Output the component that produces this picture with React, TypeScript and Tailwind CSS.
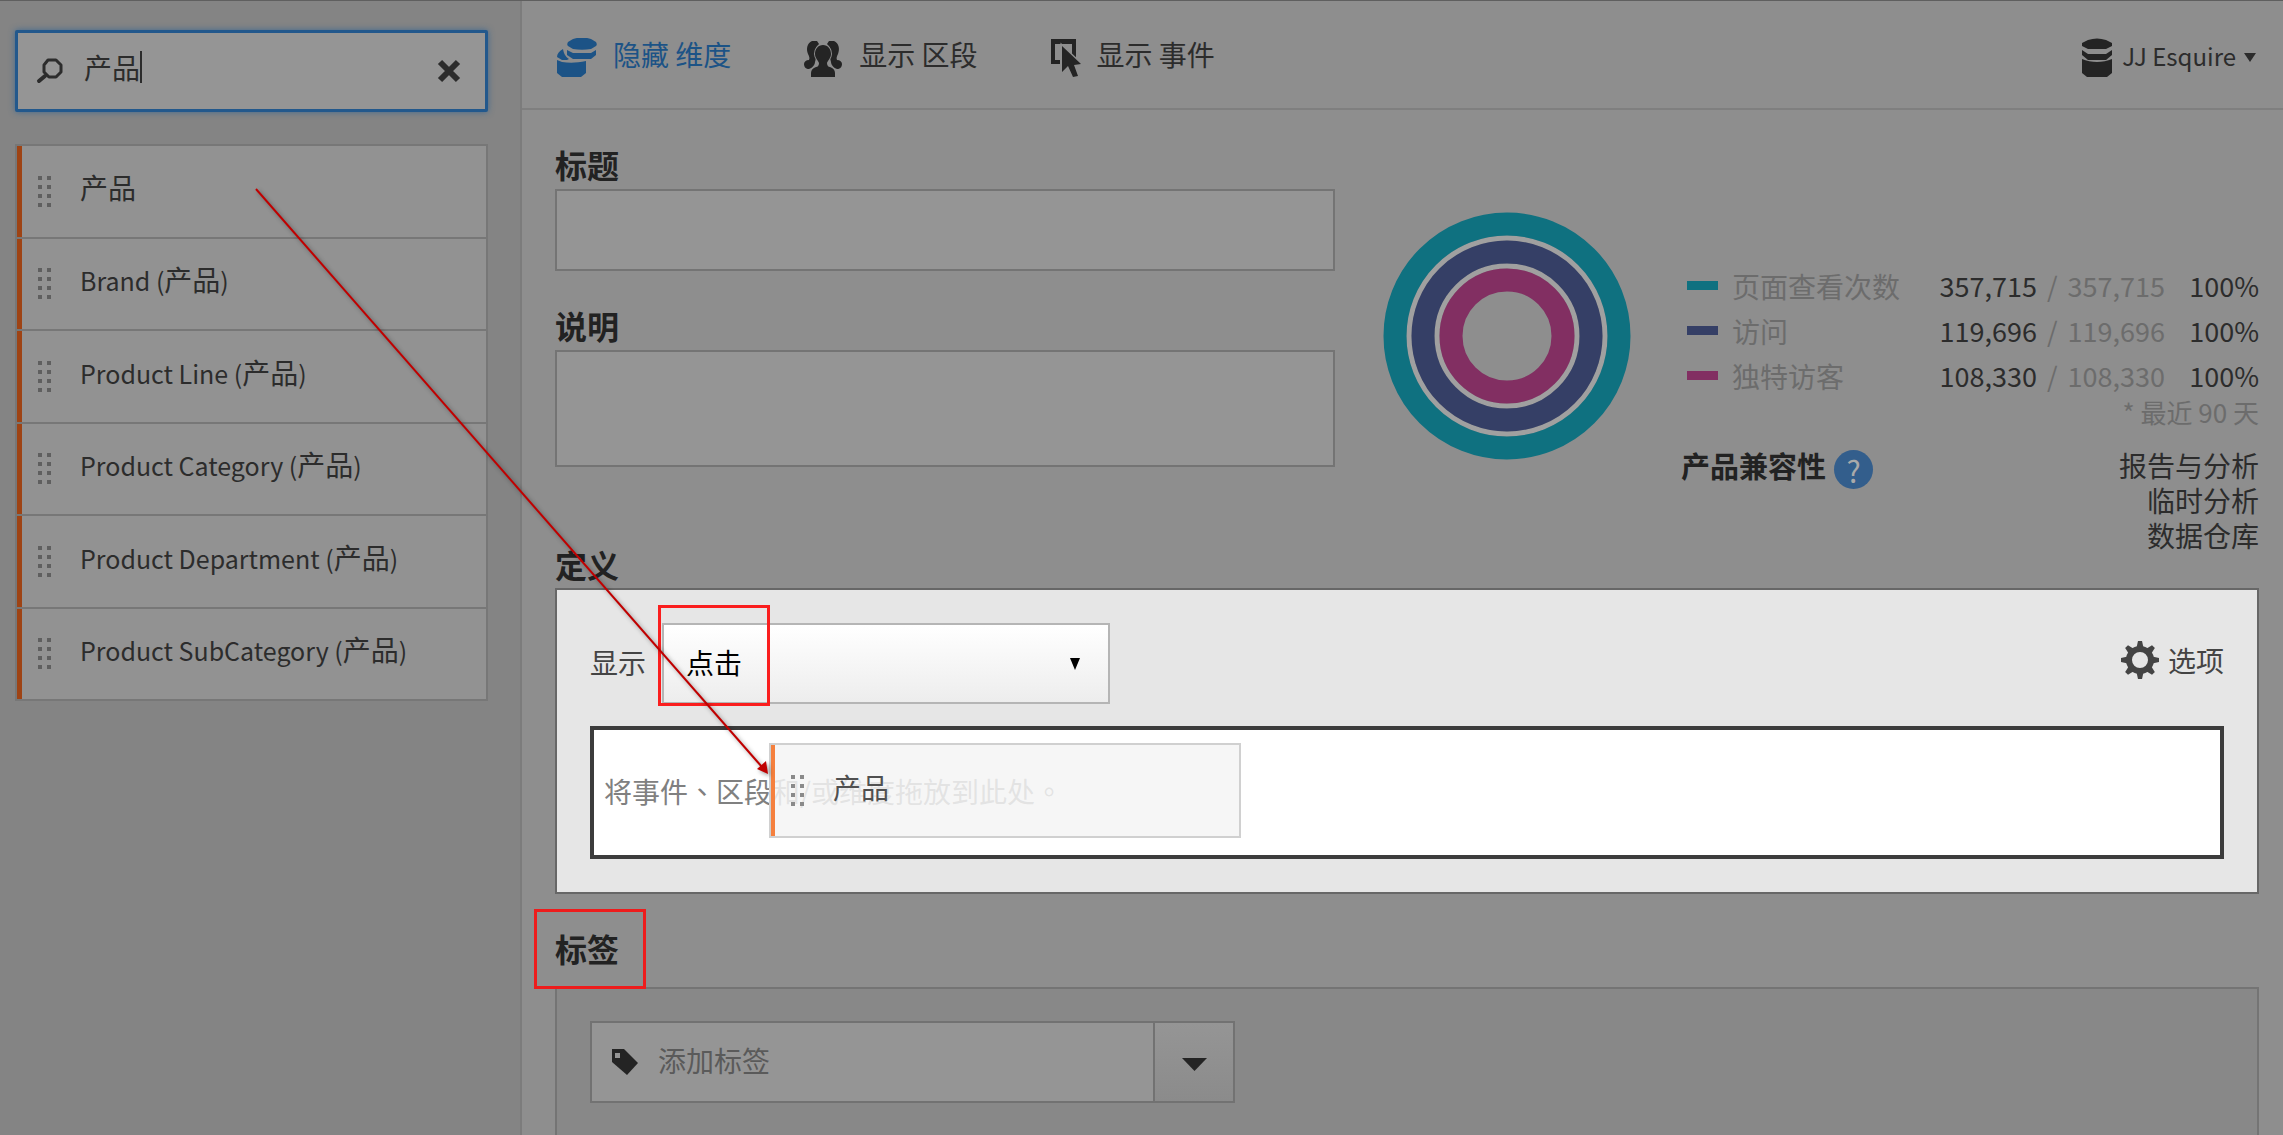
import type { ReactNode } from 'react';

const dimensions = [
  { name: '', group: '产品' },
  { name: 'Brand', group: '产品' },
  { name: 'Product Line', group: '产品' },
  { name: 'Product Category', group: '产品' },
  { name: 'Product Department', group: '产品' },
  { name: 'Product SubCategory', group: '产品' },
];

const metrics = [
  { label: '页面查看次数', value: '357,715', swatch: 'bg-[#0f7180]' },
  { label: '访问', value: '119,696', swatch: 'bg-[#353f66]' },
  { label: '独特访客', value: '108,330', swatch: 'bg-[#822f62]' },
];

const compatible = ['报告与分析', '临时分析', '数据仓库'];

function DragDots({ className }: { className: string }) {
  return (
    <svg width="14" height="31" viewBox="0 0 14 31" className={className} aria-hidden="true">
      {[0, 9, 18, 27].map((y) => (
        <g key={y} fill="currentColor">
          <rect x="0" y={y} width="4" height="4" />
          <rect x="9" y={y} width="4" height="4" />
        </g>
      ))}
    </svg>
  );
}

function SearchIcon() {
  return (
    <svg width="28" height="28" viewBox="0 0 28 28" aria-hidden="true">
      <path d="M12 3h8l5 5v7l-5 5h-7l-5-5V8z" fill="none" stroke="#2c2c2c" strokeWidth="3" strokeLinejoin="round" />
      <path d="M9 19l-6 5" stroke="#2c2c2c" strokeWidth="4" strokeLinecap="round" />
    </svg>
  );
}

function CloseIcon() {
  return (
    <svg width="24" height="24" viewBox="0 0 24 24" aria-hidden="true">
      <path d="M3 3l18 18M21 3L3 21" stroke="#2c2c2c" strokeWidth="6" />
    </svg>
  );
}

function DimensionsIcon() {
  return (
    <svg width="41" height="40" viewBox="0 0 41 40" fill="#1c5386" aria-hidden="true">
      <path d="M17 1c6-2 12-2 18 0l5 3c1 2 1 3 0 4l-5 3c-6 1-12 1-18 0l-5-3c-1-1-1-2 0-4z" />
      <path d="M11 12l6 3h18l5-3v5l-5 4H17l-6-4z" />
      <path d="M7 11c1 5 2 7 6 10l-2 1H6l-5-3c0-3 2-6 6-8z" />
      <path d="M1 22l5 2c7 1 15 1 24-1v12l-5 4H6l-5-4z" />
    </svg>
  );
}

function SegmentsIcon() {
  return (
    <svg width="40" height="40" viewBox="0 0 40 40" aria-hidden="true">
      <g fill="#242424">
        <path d="M9 3h5l2 3c-4 4-5 8-3 14l-1 4c0 3-3 6-6 7-3 0-5-2-5-5 0-2 2-4 5-4 1-2 0-4-1-6-2-5-1-11 4-13z" />
        <path d="M31 3h-5l-2 3c4 4 5 8 3 14l1 4c0 3 3 6 6 7 3 0 5-2 5-5 0-2-2-4-5-4-1-2 0-4 1-6 2-5 1-11-4-13z" />
      </g>
      <path
        d="M20 7c5 0 8 4 8 9 0 4-3 6-4 9 0 2 1 4 3 4 3 1 5 3 5 6v4H8v-4c0-3 2-5 5-6 2 0 3-2 3-4-1-3-4-5-4-9 0-5 3-9 8-9z"
        fill="#242424"
        stroke="#8e8e8e"
        strokeWidth="2"
        paintOrder="stroke"
      />
    </svg>
  );
}

function EventsIcon() {
  return (
    <svg width="31" height="40" viewBox="0 0 31 40" fill="#242424" aria-hidden="true">
      <path d="M1 1h25v18h-4V6H5v16h5v4H1z" />
      <path d="M12 8l19 18-7 1 4 11-5 1-5-11-6 6z" stroke="#8e8e8e" strokeWidth="3" paintOrder="stroke" />
    </svg>
  );
}

function DatabaseIcon() {
  return (
    <svg width="30" height="40" viewBox="0 0 30 40" fill="#242424" aria-hidden="true">
      <path d="M6 2c6-2 12-2 18 0l6 3v3l-6 3H6L0 8V5z" />
      <path d="M0 12l6 4h18l6-4v5l-6 5H6l-6-5z" />
      <path d="M0 21c9 4 21 4 30 0v14l-5 4H5l-5-4z" />
    </svg>
  );
}

function GearIcon() {
  return (
    <svg width="40" height="40" viewBox="0 0 40 40" aria-hidden="true">
      {[0, 45, 90, 135, 180, 225, 270, 315].map((a) => (
        <path key={a} d="M16 10l2-9h4l2 9z" fill="#444" transform={`rotate(${a} 20 20)`} />
      ))}
      <circle cx="20" cy="20" r="11" fill="none" stroke="#444" strokeWidth="6" />
    </svg>
  );
}

function TagIcon() {
  return (
    <svg width="26" height="26" viewBox="0 0 26 26" aria-hidden="true">
      <path d="M0 0h12l14 14-11 12L0 13z" fill="#242424" />
      <rect x="3" y="4" width="5" height="5" fill="#959595" />
    </svg>
  );
}

function Caret({ className }: { className: string }) {
  return (
    <svg viewBox="0 0 12 10" preserveAspectRatio="none" className={className} aria-hidden="true">
      <path d="M0 0h12L6 10z" fill="currentColor" />
    </svg>
  );
}

function Rings() {
  return (
    <svg width="248" height="248" viewBox="0 0 248 248" fill="none" role="img" aria-label="100%">
      <circle cx="124" cy="124" r="98" stroke="#a0a0a0" strokeWidth="5" />
      <circle cx="124" cy="124" r="70" stroke="#a0a0a0" strokeWidth="5" />
      <circle cx="124" cy="124" r="112" stroke="#0f7180" strokeWidth="23" />
      <circle cx="124" cy="124" r="84" stroke="#353f66" strokeWidth="23" />
      <circle cx="124" cy="124" r="56" stroke="#822f62" strokeWidth="23" />
    </svg>
  );
}

function ToolbarButton({ icon, children, active }: { icon: ReactNode; children: ReactNode; active?: boolean }) {
  return (
    <button type="button" className={active ? 'flex items-center gap-4 text-[#1c5386]' : 'flex items-center gap-4'}>
      {icon}
      <span className="pb-2">{children}</span>
    </button>
  );
}

function Sidebar() {
  return (
    <aside className="w-[522px] shrink-0 border-r-2 border-[#7c7c7c] bg-[#848484] pl-[15px] pr-[32px] pt-[29px]">
      <div className="flex h-[82px] items-center rounded-xs border-[3px] border-[#22588c] bg-[#959595] pl-[18px] pr-[24px] shadow-[0_0_6px_#3f688f]">
        <SearchIcon />
        <label htmlFor="search" className="sr-only">搜索</label>
        <div className="relative ml-5 flex flex-1 items-center pb-2">
          <input
            id="search"
            type="text"
            defaultValue="产品"
            className="h-[48px] w-full min-w-0 bg-transparent leading-[44px] text-[#2c2c2c] outline-none"
          />
          <span className="absolute left-[56px] h-[32px] w-[2px] bg-[#2c2c2c]" />
        </div>
        <button type="button" aria-label="清除">
          <CloseIcon />
        </button>
      </div>
      <ul className="mt-[32px] grid h-[557px] grid-rows-6 border-2 border-b-0 border-[#777]">
        {dimensions.map((d) => (
          <li key={d.name} className="flex items-center border-b-2 border-[#777] bg-[#929292]">
            <span className="h-full w-[5px] bg-[#9e4314]" />
            <DragDots className="ml-4 text-[#5f5f5f]" />
            {d.name ? (
              <span className="ml-7 pb-2 text-[25px]">
                {d.name} (<span className="text-[28px]">{d.group}</span>)
              </span>
            ) : (
              <span className="ml-7 pb-2">{d.group}</span>
            )}
          </li>
        ))}
      </ul>
    </aside>
  );
}

function TopBar() {
  return (
    <header className="flex h-[109px] items-center justify-between border-b-2 border-[#7f7f7f] pl-[34px] pr-[27px] pt-[6px]">
      <nav className="flex gap-[72px]">
        <ToolbarButton icon={<DimensionsIcon />} active>隐藏 维度</ToolbarButton>
        <ToolbarButton icon={<SegmentsIcon />}>显示 区段</ToolbarButton>
        <ToolbarButton icon={<EventsIcon />}>显示 事件</ToolbarButton>
      </nav>
      <button type="button" className="flex items-center">
        <DatabaseIcon />
        <span className="ml-[10px] pb-1 text-[24px]">JJ Esquire</span>
        <Caret className="ml-2 h-[9px] w-[12px]" />
      </button>
    </header>
  );
}

function Stats() {
  return (
    <div className="w-[578px]">
      <table className="w-full">
        <tbody>
          {metrics.map((m) => (
            <tr key={m.label} className="h-[45px]">
              <th scope="row" className="p-0 text-left font-normal text-[#6c6c6c]">
                <span className="flex items-center">
                  <span className={`ml-[6px] mr-[14px] h-[9px] w-[31px] ${m.swatch}`} />
                  {m.label}
                </span>
              </th>
              <td className="w-[222px] p-0 text-[27px] text-[#6c6c6c]">
                <span className="flex gap-[10px]">
                  <span className="text-[#2c2c2c]">{m.value}</span>
                  <span>/</span>
                  <span>{m.value}</span>
                </span>
              </td>
              <td className="w-[94px] p-0 text-right text-[27px]">100%</td>
            </tr>
          ))}
        </tbody>
      </table>
      <p className="text-right text-[26px] leading-[28px] text-[#6c6c6c]">* 最近 90 天</p>
      <div className="mt-[22px] flex items-start justify-between">
        <div className="flex items-start gap-2">
          <h3 className="text-[29px] font-bold leading-[34px] text-[#222]">产品兼容性</h3>
          <button
            type="button"
            aria-label="帮助"
            className="mt-[2px] h-[39px] w-[39px] rounded-full bg-[#335e8c] text-[30px] leading-[38px] text-[#aaa]"
          >
            ?
          </button>
        </div>
        <ul className="text-right leading-[35px]">
          {compatible.map((c) => (
            <li key={c}>{c}</li>
          ))}
        </ul>
      </div>
    </div>
  );
}

const heading = 'text-[32px] font-bold leading-[40px] text-[#222]';

function Summary() {
  return (
    <section className="flex h-[400px]">
      <div className="flex max-w-[780px] flex-1 flex-col">
        <label htmlFor="title" className={heading}>标题</label>
        <input id="title" type="text" className="mt-[5px] h-[82px] border-2 border-[#747474] bg-[#959595] px-3 outline-none" />
        <label htmlFor="description" className={`mt-[34px] ${heading}`}>说明</label>
        <textarea id="description" className="mt-[5px] h-[117px] resize-none border-2 border-[#747474] bg-[#959595] px-3 outline-none" />
      </div>
      <div className="ml-12 mt-[68px] shrink-0">
        <Rings />
      </div>
      <div className="ml-auto mt-[119px] shrink-0 leading-[40px]">
        <Stats />
      </div>
    </section>
  );
}

function Definition() {
  return (
    <section>
      <h2 className={heading}>定义</h2>
      <div className="mt-[4px] border-2 border-[#676767] bg-[#e6e6e6] p-[33px] text-[#444]">
        <div className="flex h-[81px] items-center">
          <label htmlFor="show" className="pb-1">显示</label>
          <div className="relative ml-[16px] h-full w-[448px]">
            <select
              id="show"
              className="h-full w-full appearance-none border-2 border-[#b5b5b5] bg-linear-to-b from-white to-[#ededed] px-[22px] pb-1 text-black outline-none"
            >
              <option>点击</option>
            </select>
            <Caret className="pointer-events-none absolute right-[30px] top-[35px] h-[12px] w-[10px] text-black" />
            <span className="pointer-events-none absolute -left-1 -top-[18px] h-[101px] w-[112px] border-[3px] border-[#fa1e1e]" />
          </div>
          <button type="button" className="ml-auto flex items-center gap-2 pb-2">
            <GearIcon />
            选项
          </button>
        </div>
        <div className="relative mt-[22px] flex h-[133px] items-center border-4 border-[#3c3c3c] bg-white px-[10px]">
          <p className="pb-1 font-['Noto_Sans_CJK_TC','Noto_Sans_CJK_SC',sans-serif] text-[#808080]">将事件、区段和/或维度拖放到此处。</p>
          <div className="absolute left-[175px] top-[13px] flex h-[95px] w-[472px] items-center border-2 border-[#d0d0d0] bg-[#f4f4f4]/85 text-[#505050]">
            <span className="h-full w-[4px] bg-[#f5803e]" />
            <DragDots className="ml-4 text-[#8a8a8a]" />
            <span className="ml-7 pb-2">产品</span>
          </div>
        </div>
      </div>
    </section>
  );
}

function Tags() {
  return (
    <section className="mt-[34px]">
      <h2 className={`relative w-fit ${heading}`}>
        标签
        <span className="pointer-events-none absolute -left-[21px] -top-[19px] h-[80px] w-[112px] border-[3px] border-[#ee1c1c]" />
      </h2>
      <div className="mt-[19px] h-[150px] border-2 border-[#747474] bg-[#888] px-[33px] pt-[32px]">
        <div className="flex h-[82px] w-[645px] items-center border-2 border-[#727272] bg-[#959595] pl-5">
          <TagIcon />
          <label htmlFor="tags" className="sr-only">添加标签</label>
          <input
            id="tags"
            type="text"
            placeholder="添加标签"
            className="ml-5 h-[48px] min-w-0 flex-1 bg-transparent pb-1 leading-[44px] outline-none placeholder:text-[#5a5a5a]"
          />
          <button
            type="button"
            aria-label="打开"
            className="flex h-full w-[80px] items-center justify-center border-l-2 border-[#727272] bg-linear-to-b from-[#959595] to-[#8b8b8b]"
          >
            <Caret className="mt-1 h-[13px] w-[25px] text-[#242424]" />
          </button>
        </div>
      </div>
    </section>
  );
}

export default function App() {
  return (
    <div className="relative flex h-screen overflow-hidden border-t border-[#5f5f5f] bg-[#8e8e8e] font-['Noto_Sans_CJK_SC',sans-serif] text-[28px] leading-[40px] text-[#2c2c2c]">
      <Sidebar />
      <div className="min-w-0 flex-1">
        <TopBar />
        <main className="pl-[33px] pr-[24px] pt-[34px]">
          <Summary />
          <Definition />
          <Tags />
        </main>
      </div>
      <svg
        width="800"
        height="800"
        viewBox="0 1 800 800"
        className="pointer-events-none absolute left-0 top-0 drop-shadow-[2px_2px_2px_rgba(0,0,0,0.4)]"
        aria-hidden="true"
      >
        <path d="M256 189L762 767" stroke="#c00000" strokeWidth="2" />
        <path d="M768 774l-11-5 9-8z" fill="#c00000" />
      </svg>
    </div>
  );
}
